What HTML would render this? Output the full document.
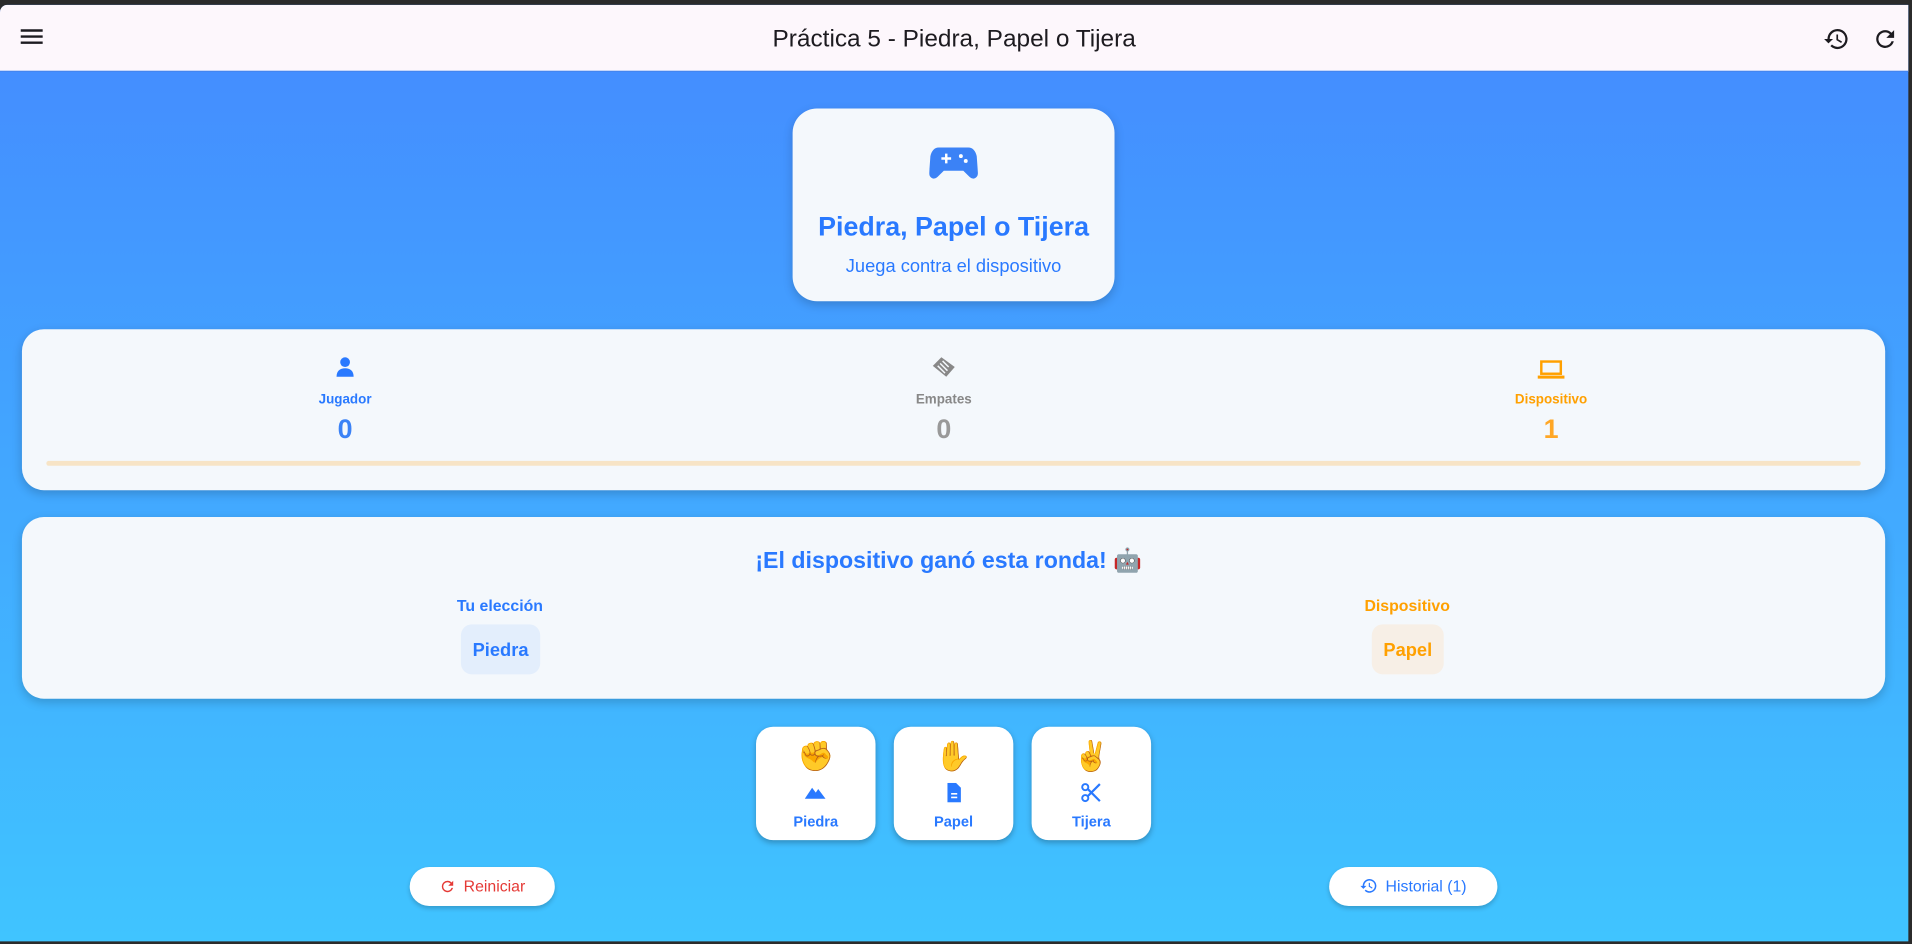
<!DOCTYPE html>
<html><head><meta charset="utf-8">
<style>
html,body{margin:0;padding:0;width:1912px;height:944px;overflow:hidden;background:#333;}
#w{position:absolute;left:0;top:0;width:1568px;height:774px;transform:scale(1.219388);transform-origin:0 0;font-family:"Liberation Sans","Noto Sans CJK JP",sans-serif;background:#2b2b2b;}
#app{position:absolute;left:0;top:4px;width:1565px;height:768px;background:linear-gradient(#448aff,#40c4ff);overflow:hidden;border-top-left-radius:6px;}
#bar{position:absolute;left:0;top:0;width:100%;height:54px;background:#fdf7fc;border-bottom:1px solid #3b7ff0;}
#bar .t{position:absolute;left:0;right:0;top:17px;text-align:center;font-size:20px;color:#1d1b20;}
.card{position:absolute;background:#f4f8fc;box-shadow:0 3px 8px rgba(0,0,0,.18);}
.c{position:absolute;text-align:center;transform:translateX(-50%);white-space:nowrap;}
.btn{position:absolute;top:592px;width:98px;height:93px;background:#fff;border-radius:14px;box-shadow:0 2px 5px rgba(0,0,0,.25);text-align:center;}
.btn .e{position:absolute;left:0;right:0;top:9px;font-size:24px;line-height:32px;}
.btn svg{position:absolute;left:40px;top:46px;}
.btn .l{position:absolute;left:0;right:0;top:71px;font-size:12px;color:#2979ff;font-weight:bold;}
.pill{position:absolute;top:707px;height:32px;background:#fff;border-radius:16px;box-shadow:0 2px 4px rgba(0,0,0,.2);font-size:13px;line-height:32px;text-align:center;}
.pill svg{vertical-align:-3px;margin-right:6px;}
</style></head><body>
<div id="w">
<div id="app">
 <div id="bar">
  <svg style="position:absolute;left:16px;top:18px" width="20" height="16" viewBox="0 0 20 16"><path d="M1 3h18M1 8h18M1 13h18" stroke="#1d1b20" stroke-width="2"/></svg>
  <div class="t">Práctica 5 - Piedra, Papel o Tijera</div>
  <svg style="position:absolute;left:1495px;top:17px" width="22" height="22" viewBox="0 0 24 24"><path fill="#1d1b20" d="M13 3a9 9 0 0 0-9 9H1l3.9 3.9L9 12H6a7 7 0 1 1 2.05 4.95l-1.42 1.42A9 9 0 1 0 13 3zm-1 5v5l4.25 2.52.77-1.28-3.52-2.09V8z"/></svg>
  <svg style="position:absolute;left:1535px;top:17px" width="22" height="22" viewBox="0 0 24 24"><path fill="#1d1b20" d="M17.65 6.35A7.96 7.96 0 0 0 12 4a8 8 0 1 0 7.73 10h-2.08A6 6 0 1 1 12 6c1.66 0 3.14.69 4.22 1.78L13 11h7V4l-2.35 2.35z"/></svg>
 </div>
 <div class="card" style="left:650px;top:85px;width:264px;height:158px;border-radius:20px;">
  <svg style="position:absolute;left:112px;top:28px" width="40" height="34" viewBox="0 0 40 34"><path fill="#3b82f6" d="M8 4h24c4 0 6 3 7 7l1 14c0 4-4 6-7 3l-5-5H12l-5 5c-3 3-7 1-7-3l1-14c1-4 3-7 7-7z"/><path d="M10 13h8M14 9v8" stroke="#fff" stroke-width="2"/><circle cx="26" cy="11" r="1.6" fill="#fff"/><circle cx="30" cy="15" r="1.6" fill="#fff"/></svg>
  <div class="c" style="left:132px;top:84px;font-size:22px;font-weight:bold;color:#2979ff;">Piedra, Papel o Tijera</div>
  <div class="c" style="left:132px;top:121px;font-size:15px;color:#2979ff;">Juega contra el dispositivo</div>
 </div>
 <div class="card" style="left:18px;top:266px;width:1528px;height:132px;border-radius:18px;">
  <svg style="position:absolute;left:257px;top:22px" width="16" height="18" viewBox="0 0 16 18"><circle cx="8" cy="5" r="4" fill="#2979ff"/><path d="M1 17c0-5 3-7 7-7s7 2 7 7z" fill="#2979ff"/></svg>
  <div class="c" style="left:265px;top:52px;font-size:11px;font-weight:bold;color:#2979ff;">Jugador</div>
  <div class="c" style="left:265px;top:69px;font-size:22px;font-weight:bold;color:#3b82f6;">0</div>
  <svg style="position:absolute;left:745px;top:21px" width="22" height="20" viewBox="0 0 22 20"><path d="M2 9l7-7 11 8-7 8z" fill="#888"/><path d="M6 9l6 6M8 7l6 6M10 5l5 5" stroke="#f4f8fc" stroke-width="1.2"/></svg>
  <div class="c" style="left:756px;top:52px;font-size:11px;color:#888;font-weight:bold;">Empates</div>
  <div class="c" style="left:756px;top:69px;font-size:22px;font-weight:bold;color:#999;">0</div>
  <svg style="position:absolute;left:1243px;top:25px" width="22" height="16" viewBox="0 0 22 16"><rect x="3" y="1.5" width="16" height="10" fill="none" stroke="#ffa000" stroke-width="2"/><rect x="0" y="13" width="22" height="2.5" fill="#ffa000"/></svg>
  <div class="c" style="left:1254px;top:52px;font-size:11px;font-weight:bold;color:#ffa000;">Dispositivo</div>
  <div class="c" style="left:1254px;top:69px;font-size:22px;font-weight:bold;color:#ffa726;">1</div>
  <div style="position:absolute;left:20px;top:108px;width:1488px;height:4px;background:#f7e4c6;border-radius:2px;"></div>
 </div>
 <div class="card" style="left:18px;top:420px;width:1528px;height:149px;border-radius:18px;">
  <div class="c" style="left:760px;top:24px;font-size:19px;font-weight:bold;color:#2979ff;">¡El dispositivo ganó esta ronda! 🤖</div>
  <div class="c" style="left:392px;top:65px;font-size:13px;font-weight:bold;color:#2979ff;">Tu elección</div>
  <div style="position:absolute;left:360px;top:88px;width:65px;height:41px;border-radius:9px;background:#e3eefc;color:#2979ff;font-weight:bold;font-size:15px;line-height:43px;text-align:center;">Piedra</div>
  <div class="c" style="left:1136px;top:65px;font-size:13px;font-weight:bold;color:#ffa000;">Dispositivo</div>
  <div style="position:absolute;left:1107px;top:88px;width:59px;height:41px;border-radius:9px;background:#f7efe6;color:#ffa000;font-weight:bold;font-size:15px;line-height:43px;text-align:center;">Papel</div>
 </div>
 <div class="btn" style="left:620px;"><div class="e">✊</div><svg width="18" height="14" viewBox="0 0 18 14"><path d="M0 13l6-9 3 4 2-3 6 8z" fill="#2979ff"/></svg><div class="l">Piedra</div></div>
 <div class="btn" style="left:733px;"><div class="e">✋</div><svg width="18" height="16" viewBox="0 0 18 16"><path d="M4 0h7l4 4v12H4z" fill="#2979ff"/><path d="M7 9h5M7 12h5" stroke="#fff" stroke-width="1.3"/></svg><div class="l">Papel</div></div>
 <div class="btn" style="left:846px;"><div class="e">✌️</div><svg width="18" height="16" viewBox="0 0 18 16"><circle cx="4" cy="3.5" r="2.5" fill="none" stroke="#2979ff" stroke-width="1.6"/><circle cx="4" cy="12.5" r="2.5" fill="none" stroke="#2979ff" stroke-width="1.6"/><path d="M6 5l10 10M6 11L16 1" stroke="#2979ff" stroke-width="1.8"/></svg><div class="l">Tijera</div></div>
 <div class="pill" style="left:336px;width:119px;color:#e53935;"><svg width="14" height="14" viewBox="0 0 24 24"><path fill="#e53935" d="M17.65 6.35A7.96 7.96 0 0 0 12 4a8 8 0 1 0 7.73 10h-2.08A6 6 0 1 1 12 6c1.66 0 3.14.69 4.22 1.78L13 11h7V4l-2.35 2.35z"/></svg>Reiniciar</div>
 <div class="pill" style="left:1090px;width:138px;color:#2979ff;"><svg width="15" height="15" viewBox="0 0 24 24"><path fill="#2979ff" d="M13 3a9 9 0 0 0-9 9H1l3.9 3.9L9 12H6a7 7 0 1 1 2.05 4.95l-1.42 1.42A9 9 0 1 0 13 3zm-1 5v5l4.25 2.52.77-1.28-3.52-2.09V8z"/></svg>Historial (1)</div>
</div>
</div>
</body></html>
